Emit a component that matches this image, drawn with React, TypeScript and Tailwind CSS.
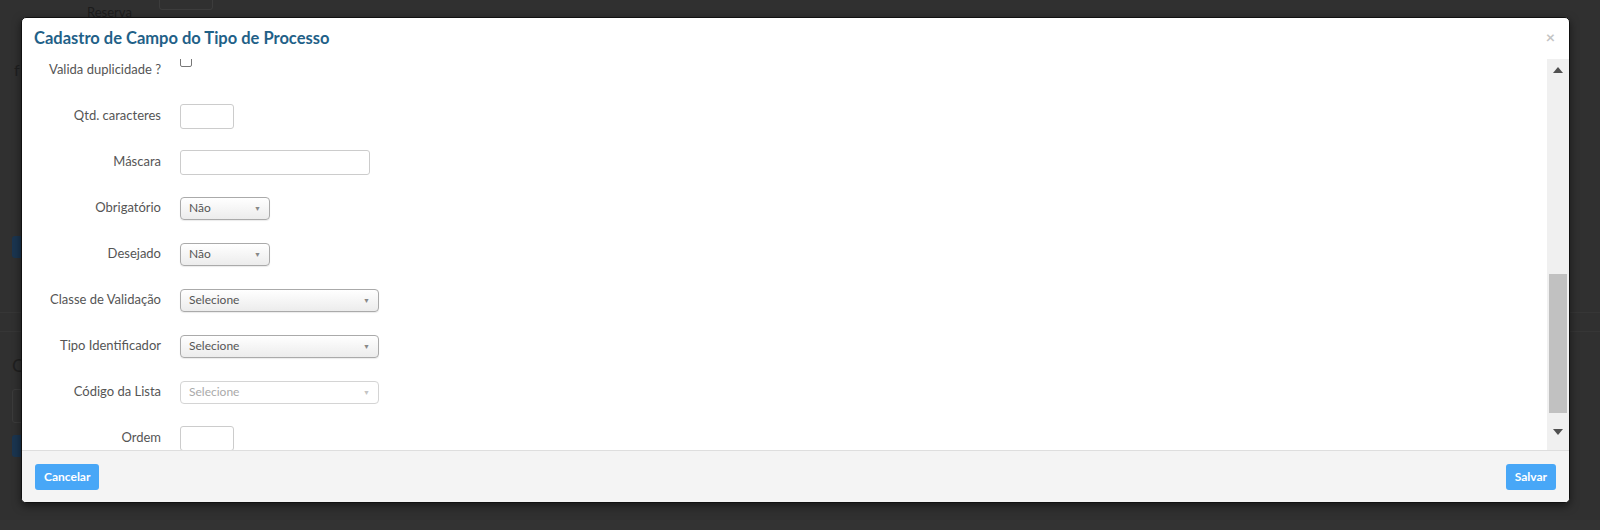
import { ReactNode } from 'react'

const font = { fontFamily: 'Lato, "Open Sans", sans-serif' }

function Row({ label, children, top = false }: { label: string; children: ReactNode; top?: boolean }) {
  return (
    <div className={`flex h-[46px] ${top ? 'items-start' : 'items-center'}`}>
      <label className={`w-[139px] shrink-0 text-right text-[13px] text-[#555] ${top ? 'self-center' : ''}`}>
        {label}
      </label>
      <div className={`ml-[19px] ${top ? 'pt-[8px]' : ''}`}>{children}</div>
    </div>
  )
}

function Select({ value, width, disabled = false }: { value: string; width: string; disabled?: boolean }) {
  return (
    <div
      className={`flex h-[23px] items-center justify-between rounded-[4px] border pl-[8px] pr-[8px] text-[12px] ${width} ${
        disabled
          ? 'border-[#d4d4d4] bg-white text-[#aaa]'
          : 'border-[#aaa] bg-gradient-to-b from-white to-[#ececec] text-[#555] shadow-[0_1px_1px_rgba(0,0,0,0.08)]'
      }`}
    >
      <span>{value}</span>
      <span className={`text-[7px] ${disabled ? 'text-[#c4c4c4]' : 'text-[#888]'}`}>▼</span>
    </div>
  )
}

function TextInput({ width }: { width: string }) {
  return <div className={`h-[25px] rounded-[3px] border border-[#ccc] bg-white ${width}`} />
}

export default function App() {
  return (
    <div className="relative h-[530px] w-[1600px] overflow-hidden bg-[#303030]" style={font}>
      {/* dimmed page behind the overlay */}
      <div className="flex h-[20px] items-start">
        <span className="ml-[87px] mt-[3px] text-[13px] text-[#1c1c1c]">Reserva</span>
        <div className="ml-[27px] mt-[-6px] h-[16px] w-[54px] rounded-[3px] border border-[#3c3c3c]" />
      </div>
      <div className="ml-[14px] mt-[42px] text-[16px] leading-none text-[#1f1f1f]">f</div>
      <div className="ml-[12px] mt-[158px] h-[22px] w-[20px] rounded-[3px] bg-[#1a3550]" />
      <div className="mt-[54px] h-px w-full bg-[#363636]" />
      <div className="mt-[18px] h-px w-full bg-[#363636]" />
      <div className="ml-[12px] mt-[24px] text-[18px] leading-none text-[#1f1f1f]">C</div>
      <div className="ml-[12px] mt-[15px] h-[34px] w-[40px] rounded-[3px] border border-[#3b3b3b]" />
      <div className="ml-[12px] mt-[12px] h-[22px] w-[20px] rounded-[3px] bg-[#1a3550]" />
      <div className="absolute bottom-0 left-0 h-[10px] w-full bg-[#333]" />

      {/* modal */}
      <div className="absolute left-[21px] top-[17px] flex h-[486px] w-[1549px] flex-col overflow-hidden rounded-[5px] border border-[#111] bg-white shadow-[0_3px_8px_rgba(0,0,0,0.5)]">
        <div className="flex h-[41px] shrink-0 items-center justify-between pl-[12px] pr-[14px]">
          <h3 className="text-[16.5px] font-bold text-[#1f6188]">Cadastro de Campo do Tipo de Processo</h3>
          <span className="mb-[4px] text-[16px] font-bold leading-none text-[#c4c4c4]">×</span>
        </div>

        <div className="flex min-h-0 flex-1">
          <div className="min-w-0 flex-1 overflow-hidden">
            <div className="mt-[-12px]">
              <Row label="Valida duplicidade ?" top>
                <div className="h-[12px] w-[12px] rounded-[2px] border border-[#777] bg-white" />
              </Row>
              <Row label="Qtd. caracteres">
                <TextInput width="w-[54px]" />
              </Row>
              <Row label="Máscara">
                <TextInput width="w-[190px]" />
              </Row>
              <Row label="Obrigatório">
                <Select value="Não" width="w-[90px]" />
              </Row>
              <Row label="Desejado">
                <Select value="Não" width="w-[90px]" />
              </Row>
              <Row label="Classe de Validação">
                <Select value="Selecione" width="w-[199px]" />
              </Row>
              <Row label="Tipo Identificador">
                <Select value="Selecione" width="w-[199px]" />
              </Row>
              <Row label="Código da Lista">
                <Select value="Selecione" width="w-[199px]" disabled />
              </Row>
              <Row label="Ordem">
                <TextInput width="w-[54px]" />
              </Row>
            </div>
          </div>

          {/* scrollbar */}
          <div className="flex w-[22px] shrink-0 flex-col bg-[#f0f0f0]">
            <div className="flex h-[22px] items-center justify-center">
              <svg width="10" height="6" viewBox="0 0 10 6">
                <path d="M5 0L10 6H0z" fill="#505050" />
              </svg>
            </div>
            <div className="h-[193px]" />
            <div className="mx-[2px] h-[139px] bg-[#c1c1c1]" />
            <div className="flex flex-1 items-center justify-center">
              <svg width="10" height="6" viewBox="0 0 10 6">
                <path d="M0 0H10L5 6z" fill="#505050" />
              </svg>
            </div>
          </div>
        </div>

        <div className="flex h-[52px] shrink-0 items-center justify-between border-t border-[#dedede] bg-[#f4f4f4] pl-[13px] pr-[13px]">
          <button className="h-[26px] rounded-[3px] bg-[#48a7f7] px-[9px] text-[12px] font-bold text-white">Cancelar</button>
          <button className="h-[26px] rounded-[3px] bg-[#48a7f7] px-[9px] text-[12px] font-bold text-white">Salvar</button>
        </div>
      </div>
    </div>
  )
}
